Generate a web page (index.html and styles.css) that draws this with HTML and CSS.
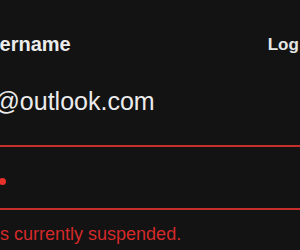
FILE: index.html
```html
<!DOCTYPE html>
<html lang="en">
<head>
<meta charset="utf-8">
<title>Account</title>
<link rel="stylesheet" href="styles.css">
</head>
<body>
<main class="page">
  <header class="header">
    <span class="username">Username</span>
    <a class="logout" href="#">Log out</a>
  </header>
  <div class="email">jo@outlook.com</div>
  <div class="field">
    <span class="dot"></span><span class="dot"></span><span class="dot"></span><span class="dot"></span>
  </div>
  <p class="error">Account is currently suspended.</p>
</main>
</body>
</html>
```

FILE: styles.css
```css
html, body {
  margin: 0;
  padding: 0;
  background: #131313;
  overflow: hidden;
}

body {
  font-family: "Liberation Sans", Arial, sans-serif;
  color: #ececec;
}

.page {
  width: 356px;
  margin-left: -26px;
  padding-top: 33px;
}

.header {
  display: flex;
  justify-content: space-between;
  align-items: center;
}

.username {
  font-size: 20px;
  font-weight: bold;
}

.logout {
  font-size: 17px;
  font-weight: bold;
  color: #e6e6e6;
  text-decoration: none;
  white-space: nowrap;
}

.email {
  margin-top: 31px;
  margin-left: 1px;
  font-size: 25px;
}

.field {
  margin: 29px -30px 0 -60px;
  height: 54px;
  padding: 7px 0 0 44px;
  border: 2px solid #c62f2c;
  display: flex;
  align-items: center;
  gap: 6px;
}

.dot {
  width: 7px;
  height: 7px;
  border-radius: 50%;
  background: #e8312b;
}

.error {
  margin: 14px 0 0 -48px;
  font-size: 18px;
  color: #d42a2a;
  white-space: nowrap;
}
```
